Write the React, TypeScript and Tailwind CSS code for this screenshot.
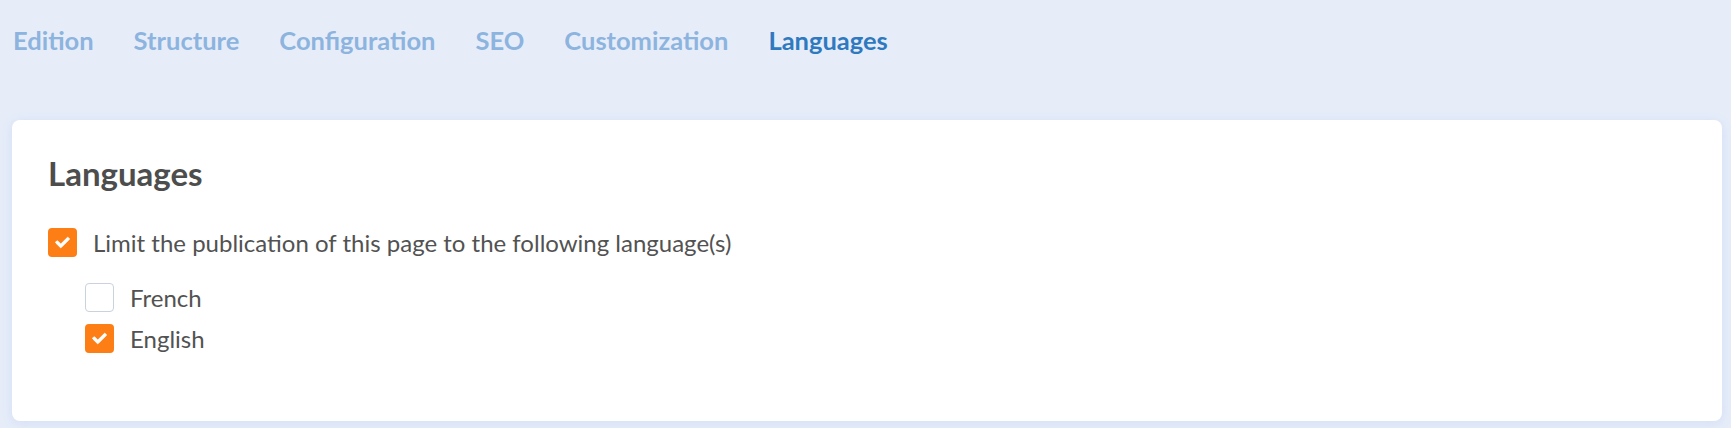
import React from 'react';

const tabs = ['Edition', 'Structure', 'Configuration', 'SEO', 'Customization', 'Languages'];

const Check = () => (
  <svg viewBox="-20 -20 552 552" className="w-[15px] h-[15px] fill-white stroke-white stroke-[30]">
    <path d="M173.898 439.404l-166.4-166.4c-9.997-9.997-9.997-26.206 0-36.204l36.203-36.204c9.997-9.998 26.207-9.998 36.204 0L192 312.69 432.095 72.596c9.997-9.997 26.207-9.997 36.204 0l36.203 36.204c9.997 9.997 9.997 26.206 0 36.204l-294.4 294.401c-9.998 9.997-26.207 9.997-36.204-.001z" />
  </svg>
);

const Checkbox = ({ checked }: { checked: boolean }) =>
  checked ? (
    <span className="w-[29px] h-[29px] rounded-[4px] bg-[#fd7e14] flex items-center justify-center shrink-0">
      <Check />
    </span>
  ) : (
    <span className="w-[29px] h-[29px] rounded-[4px] bg-white border border-[#c9d2dd] shrink-0" />
  );

const Option = ({ label, checked }: { label: string; checked: boolean }) => (
  <label className="flex items-center gap-4 h-[29px] cursor-pointer">
    <Checkbox checked={checked} />
    <span className="text-[24px] leading-[29px] text-[#525252]">{label}</span>
  </label>
);

export default function App() {
  return (
    <div className="min-h-screen bg-[#e6edf9] font-['Lato',sans-serif] overflow-hidden">
      <nav className="flex items-center gap-[40px] h-[80px] pl-[13px]">
        {tabs.map((t) => (
          <a
            key={t}
            className={`text-[25.5px] font-bold ${t === 'Languages' ? 'text-[#2f7abf]' : 'text-[#8db4de]'}`}
          >
            {t}
          </a>
        ))}
      </nav>

      <section className="mt-[40px] ml-3 mr-[9px] bg-white rounded-lg shadow-[0_2px_12px_rgba(70,120,210,0.12)] pt-[33px] pb-[68px] px-9">
        <h2 className="text-[33px] leading-[40px] font-bold text-[#4d4d4d]">Languages</h2>

        <div className="mt-[35px]">
          <Option label="Limit the publication of this page to the following language(s)" checked />
        </div>

        <div className="ml-[37px] mt-[26px] flex flex-col gap-3">
          <Option label="French" checked={false} />
          <Option label="English" checked />
        </div>
      </section>
    </div>
  );
}
